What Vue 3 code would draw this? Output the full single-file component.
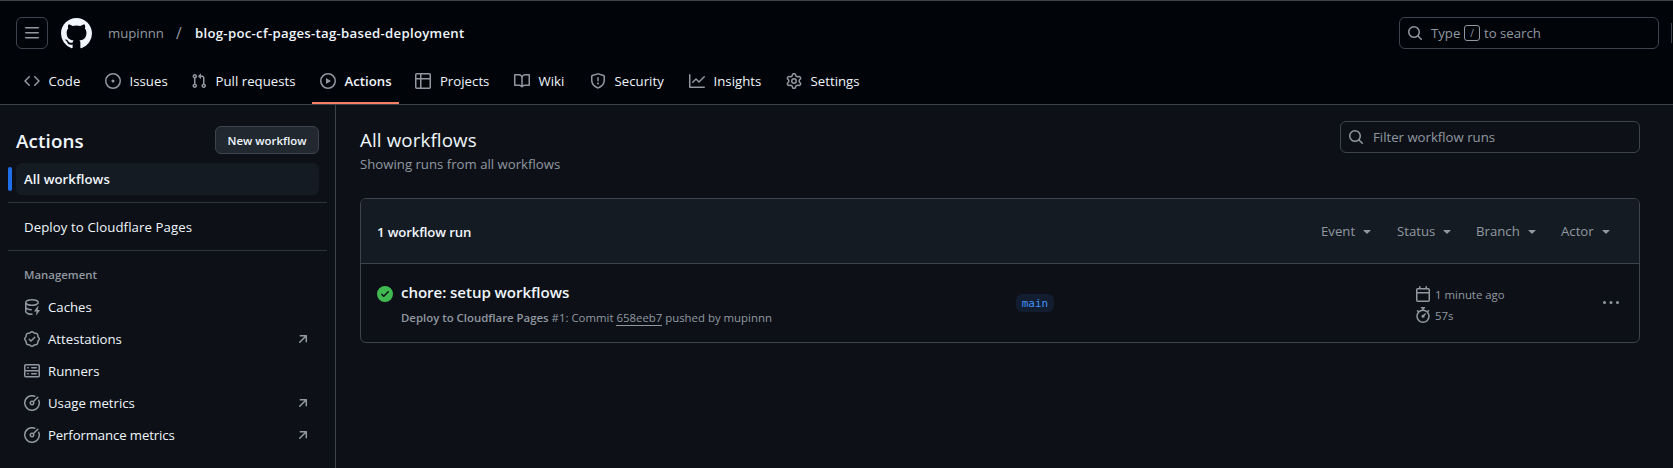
<script setup>
import { h } from 'vue'

const icons = {
  menu: 'M1 2.75A.75.75 0 0 1 1.75 2h12.5a.75.75 0 0 1 0 1.5H1.75A.75.75 0 0 1 1 2.75Zm0 5A.75.75 0 0 1 1.75 7h12.5a.75.75 0 0 1 0 1.5H1.75A.75.75 0 0 1 1 7.75ZM1.75 12h12.5a.75.75 0 0 1 0 1.5H1.75a.75.75 0 0 1 0-1.5Z',
  mark: 'M8 0c4.42 0 8 3.58 8 8a8.013 8.013 0 0 1-5.45 7.59c-.4.08-.55-.17-.55-.38 0-.27.01-1.13.01-2.2 0-.75-.25-1.23-.54-1.48 1.78-.2 3.65-.88 3.65-3.95 0-.88-.31-1.59-.82-2.15.08-.2.36-1.02-.08-2.12 0 0-.67-.22-2.2.82-.64-.18-1.32-.27-2-.27-.68 0-1.36.09-2 .27-1.53-1.03-2.2-.82-2.2-.82-.44 1.1-.16 1.92-.08 2.12-.51.56-.82 1.28-.82 2.15 0 3.06 1.86 3.75 3.64 3.95-.23.2-.44.55-.51 1.07-.46.21-1.61.55-2.33-.66-.15-.24-.6-.83-1.23-.82-.67.01-.27.38.01.53.34.19.73.9.82 1.13.16.45.68 1.31 2.69.94 0 .67.01 1.3.01 1.49 0 .21-.15.45-.55.38A7.995 7.995 0 0 1 0 8c0-4.42 3.58-8 8-8Z',
  code: 'm11.28 3.22 4.25 4.25a.75.75 0 0 1 0 1.06l-4.25 4.25a.749.749 0 0 1-1.275-.326.749.749 0 0 1 .215-.734L13.94 8l-3.72-3.72a.749.749 0 0 1 .326-1.275.749.749 0 0 1 .734.215Zm-6.56 0a.751.751 0 0 1 1.042.018.751.751 0 0 1 .018 1.042L2.06 8l3.72 3.72a.749.749 0 0 1-.326 1.275.749.749 0 0 1-.734-.215L.47 8.53a.75.75 0 0 1 0-1.06Z',
  issue: 'M8 9.5a1.5 1.5 0 1 0 0-3 1.5 1.5 0 0 0 0 3Z M8 0a8 8 0 1 1 0 16A8 8 0 0 1 8 0ZM1.5 8a6.5 6.5 0 1 0 13 0 6.5 6.5 0 0 0-13 0Z',
  pull: 'M1.5 3.25a2.25 2.25 0 1 1 3 2.122v5.256a2.251 2.251 0 1 1-1.5 0V5.372A2.25 2.25 0 0 1 1.5 3.25Zm5.677-.177L9.573.677A.25.25 0 0 1 10 .854V2.5h1A2.5 2.5 0 0 1 13.5 5v5.628a2.251 2.251 0 1 1-1.5 0V5a1 1 0 0 0-1-1h-1v1.646a.25.25 0 0 1-.427.177L7.177 3.427a.25.25 0 0 1 0-.354ZM3.75 2.5a.75.75 0 1 0 0 1.5.75.75 0 0 0 0-1.5Zm0 9.5a.75.75 0 1 0 0 1.5.75.75 0 0 0 0-1.5Zm8.25.75a.75.75 0 1 0 1.5 0 .75.75 0 0 0-1.5 0Z',
  play: 'M8 0a8 8 0 1 1 0 16A8 8 0 0 1 8 0ZM1.5 8a6.5 6.5 0 1 0 13 0 6.5 6.5 0 0 0-13 0Zm4.879-2.773 4.264 2.559a.25.25 0 0 1 0 .428l-4.264 2.559A.25.25 0 0 1 6 10.559V5.442a.25.25 0 0 1 .379-.215Z',
  table: 'M0 1.75C0 .784.784 0 1.75 0h12.5C15.216 0 16 .784 16 1.75v12.5A1.75 1.75 0 0 1 14.25 16H1.75A1.75 1.75 0 0 1 0 14.25ZM6.5 6.5v8h7.75a.25.25 0 0 0 .25-.25V6.5Zm8-1.5V1.75a.25.25 0 0 0-.25-.25H6.5V5Zm-13 1.5v7.75c0 .138.112.25.25.25H5v-8ZM5 5V1.5H1.75a.25.25 0 0 0-.25.25V5Z',
  book: 'M0 1.75A.75.75 0 0 1 .75 1h4.253c1.227 0 2.317.59 3 1.501A3.743 3.743 0 0 1 11.006 1h4.245a.75.75 0 0 1 .75.75v10.5a.75.75 0 0 1-.75.75h-4.507a2.25 2.25 0 0 0-1.591.659l-.622.621a.75.75 0 0 1-1.06 0l-.622-.621A2.25 2.25 0 0 0 5.258 13H.75a.75.75 0 0 1-.75-.75Zm7.251 10.324.004-5.073-.002-2.253A2.25 2.25 0 0 0 5.003 2.5H1.5v9h3.757a3.75 3.75 0 0 1 1.994.574ZM8.755 4.75l-.004 7.322a3.752 3.752 0 0 1 1.992-.572H14.5v-9h-3.495a2.25 2.25 0 0 0-2.25 2.25Z',
  shield: 'M7.467.133a1.748 1.748 0 0 1 1.066 0l5.25 1.68A1.75 1.75 0 0 1 15 3.48V7c0 1.566-.32 3.182-1.303 4.682-.983 1.498-2.585 2.813-5.032 3.855a1.697 1.697 0 0 1-1.33 0c-2.447-1.042-4.049-2.357-5.032-3.855C1.32 10.182 1 8.566 1 7V3.48a1.75 1.75 0 0 1 1.217-1.667Zm.61 1.429a.25.25 0 0 0-.153 0l-5.25 1.68a.25.25 0 0 0-.174.238V7c0 1.358.275 2.666 1.057 3.86.784 1.194 2.121 2.34 4.366 3.297a.196.196 0 0 0 .154 0c2.245-.956 3.582-2.104 4.366-3.298C13.225 9.666 13.5 8.36 13.5 7V3.48a.251.251 0 0 0-.174-.237l-5.25-1.68ZM8.75 4.75v3a.75.75 0 0 1-1.5 0v-3a.75.75 0 0 1 1.5 0ZM9 10.5a1 1 0 1 1-2 0 1 1 0 0 1 2 0Z',
  graph: 'M1.5 1.75V13.5h13.75a.75.75 0 0 1 0 1.5H.75a.75.75 0 0 1-.75-.75V1.75a.75.75 0 0 1 1.5 0Zm14.28 2.53-5.25 5.25a.75.75 0 0 1-1.06 0L7 7.06 4.28 9.78a.751.751 0 0 1-1.042-.018.751.751 0 0 1-.018-1.042l3.25-3.25a.75.75 0 0 1 1.06 0L10 7.94l4.72-4.72a.751.751 0 0 1 1.042.018.751.751 0 0 1 .018 1.042Z',
  gear: 'M8 0a8.2 8.2 0 0 1 .701.031C9.444.095 9.99.645 10.16 1.29l.288 1.107c.018.066.079.158.212.224.231.114.454.243.668.386.123.082.233.09.299.071l1.103-.303c.644-.176 1.392.021 1.82.63.27.385.506.792.704 1.218.315.675.111 1.422-.364 1.891l-.814.806c-.049.048-.098.147-.088.294.016.257.016.515 0 .772-.01.147.038.246.088.294l.814.806c.475.469.679 1.216.364 1.891a7.977 7.977 0 0 1-.704 1.217c-.428.61-1.176.807-1.82.63l-1.102-.302c-.067-.019-.177-.011-.3.071a5.909 5.909 0 0 1-.668.386c-.133.066-.194.158-.211.224l-.29 1.106c-.168.646-.715 1.196-1.458 1.26a8.006 8.006 0 0 1-1.402 0c-.743-.064-1.289-.614-1.458-1.26l-.289-1.106c-.018-.066-.079-.158-.212-.224a5.738 5.738 0 0 1-.668-.386c-.123-.082-.233-.09-.299-.071l-1.103.303c-.644.176-1.392-.021-1.82-.63a8.12 8.12 0 0 1-.704-1.218c-.315-.675-.111-1.422.363-1.891l.815-.806c.05-.048.098-.147.088-.294a6.214 6.214 0 0 1 0-.772c.01-.147-.038-.246-.088-.294l-.815-.806C.635 6.045.431 5.298.746 4.623a7.92 7.92 0 0 1 .704-1.217c.428-.61 1.176-.807 1.82-.63l1.102.302c.067.019.177.011.3-.071.214-.143.437-.272.668-.386.133-.066.194-.158.211-.224l.29-1.106C6.009.645 6.556.095 7.299.03 7.53.01 7.764 0 8 0Zm-.571 1.525c-.036.003-.108.036-.137.146l-.289 1.105c-.147.561-.549.967-.998 1.189-.173.086-.34.183-.5.29-.417.278-.97.423-1.529.27l-1.103-.303c-.109-.03-.175.016-.195.045-.22.312-.412.644-.573.99-.014.031-.021.11.059.19l.815.806c.411.406.562.957.53 1.456a4.709 4.709 0 0 0 0 .582c.032.499-.119 1.05-.53 1.456l-.815.806c-.081.08-.073.159-.059.19.162.346.353.677.573.989.02.03.085.076.195.046l1.102-.303c.56-.153 1.113-.008 1.53.27.161.107.328.204.501.29.447.222.85.629.997 1.189l.289 1.105c.029.109.101.143.137.146a6.6 6.6 0 0 0 1.142 0c.036-.003.108-.036.137-.146l.289-1.105c.147-.561.549-.967.998-1.189.173-.086.34-.183.5-.29.417-.278.97-.423 1.529-.27l1.103.303c.109.029.175-.016.195-.045.22-.313.411-.644.573-.99.014-.031.021-.11-.059-.19l-.815-.806c-.411-.406-.562-.957-.53-1.456a4.709 4.709 0 0 0 0-.582c-.032-.499.119-1.05.53-1.456l.815-.806c.081-.08.073-.159.059-.19a6.464 6.464 0 0 0-.573-.989c-.02-.03-.085-.076-.195-.046l-1.102.303c-.56.153-1.113.008-1.53-.27a4.44 4.44 0 0 0-.501-.29c-.447-.222-.85-.629-.997-1.189l-.289-1.105c-.029-.11-.101-.143-.137-.146a6.6 6.6 0 0 0-1.142 0ZM11 8a3 3 0 1 1-6 0 3 3 0 0 1 6 0ZM9.5 8a1.5 1.5 0 1 0-3.001.001A1.5 1.5 0 0 0 9.5 8Z',
  search: 'M10.68 11.74a6 6 0 0 1-7.922-8.982 6 6 0 0 1 8.982 7.922l3.04 3.04a.749.749 0 0 1-.326 1.275.749.749 0 0 1-.734-.215ZM11.5 7a4.499 4.499 0 1 0-8.997 0A4.499 4.499 0 0 0 11.5 7Z',
  cache: 'M2.5 5.724V8c0 .248.238.7 1.169 1.159.874.43 2.144.745 3.62.822a.75.75 0 1 1-.078 1.498c-1.622-.085-3.102-.432-4.204-.975a5.565 5.565 0 0 1-.507-.28V12.5c0 .133.058.318.282.551.227.237.591.483 1.101.707 1.015.447 2.47.742 4.117.742a.75.75 0 0 1 0 1.5c-1.805 0-3.475-.32-4.721-.869-.623-.274-1.173-.619-1.579-1.041-.408-.425-.7-.964-.7-1.59v-9c0-.626.292-1.165.7-1.591.406-.42.956-.766 1.579-1.04C4.525.32 6.195 0 8 0c1.806 0 3.476.32 4.721.869.623.274 1.173.619 1.579 1.041.408.425.7.964.7 1.59 0 .626-.292 1.165-.7 1.591-.406.42-.956.766-1.578 1.04C11.475 6.68 9.805 7 8 7c-1.805 0-3.475-.32-4.721-.869a6.15 6.15 0 0 1-.779-.407Zm0-2.224c0 .133.058.318.282.551.227.237.591.483 1.101.707C4.898 5.205 6.353 5.5 8 5.5c1.646 0 3.101-.295 4.118-.742.508-.224.873-.471 1.1-.708.224-.232.282-.417.282-.55 0-.133-.058-.318-.282-.551-.227-.237-.591-.483-1.101-.707C11.102 1.795 9.647 1.5 8 1.5c-1.646 0-3.101.295-4.118.742-.508.224-.873.471-1.1.708-.224.232-.282.417-.282.55Z M14.49 7.582a.375.375 0 0 0-.66-.313l-3.625 4.625a.375.375 0 0 0 .295.606h2.127l-.619 2.922a.375.375 0 0 0 .666.304l3.125-4.125A.375.375 0 0 0 15.5 11h-1.778l.769-3.418Z',
  verified: 'm9.585.52.929.68c.153.112.331.186.518.215l1.138.175a2.678 2.678 0 0 1 2.24 2.24l.174 1.139c.029.187.103.365.215.518l.68.928a2.677 2.677 0 0 1 0 3.17l-.68.928a1.174 1.174 0 0 0-.215.518l-.175 1.138a2.678 2.678 0 0 1-2.241 2.241l-1.138.175a1.17 1.17 0 0 0-.518.215l-.928.68a2.677 2.677 0 0 1-3.17 0l-.928-.68a1.174 1.174 0 0 0-.518-.215L3.83 14.41a2.678 2.678 0 0 1-2.24-2.24l-.175-1.138a1.17 1.17 0 0 0-.215-.518l-.68-.928a2.677 2.677 0 0 1 0-3.17l.68-.928c.112-.153.186-.331.215-.518l.175-1.14a2.678 2.678 0 0 1 2.24-2.24l1.139-.175c.187-.029.365-.103.518-.215l.928-.68a2.677 2.677 0 0 1 3.17 0ZM7.303 1.728l-.927.68a2.67 2.67 0 0 1-1.18.489l-1.137.174a1.179 1.179 0 0 0-.987.987l-.174 1.136a2.677 2.677 0 0 1-.489 1.18l-.68.928a1.18 1.18 0 0 0 0 1.394l.68.927c.256.348.424.753.489 1.18l.174 1.137c.078.509.478.909.987.987l1.136.174a2.67 2.67 0 0 1 1.18.489l.928.68c.414.305.979.305 1.394 0l.927-.68a2.67 2.67 0 0 1 1.18-.489l1.137-.174a1.18 1.18 0 0 0 .987-.987l.174-1.136a2.67 2.67 0 0 1 .489-1.18l.68-.928a1.176 1.176 0 0 0 0-1.394l-.68-.927a2.686 2.686 0 0 1-.489-1.18l-.174-1.137a1.179 1.179 0 0 0-.987-.987l-1.136-.174a2.677 2.677 0 0 1-1.18-.489l-.928-.68a1.176 1.176 0 0 0-1.394 0ZM11.28 6.78l-3.75 3.75a.75.75 0 0 1-1.06 0L4.72 8.78a.751.751 0 0 1 .018-1.042.751.751 0 0 1 1.042-.018L7 8.94l3.22-3.22a.751.751 0 0 1 1.042.018.751.751 0 0 1 .018 1.042Z',
  server: 'M1.75 1h12.5c.966 0 1.75.784 1.75 1.75v4c0 .372-.116.717-.314 1 .198.283.314.628.314 1v4a1.75 1.75 0 0 1-1.75 1.75H1.75A1.75 1.75 0 0 1 0 12.75v-4c0-.358.109-.707.314-1a1.739 1.739 0 0 1-.314-1v-4C0 1.784.784 1 1.75 1ZM1.5 2.75v4c0 .138.112.25.25.25h12.5a.25.25 0 0 0 .25-.25v-4a.25.25 0 0 0-.25-.25H1.75a.25.25 0 0 0-.25.25Zm.25 5.75a.25.25 0 0 0-.25.25v4c0 .138.112.25.25.25h12.5a.25.25 0 0 0 .25-.25v-4a.25.25 0 0 0-.25-.25ZM7 4.75A.75.75 0 0 1 7.75 4h4.5a.75.75 0 0 1 0 1.5h-4.5A.75.75 0 0 1 7 4.75ZM7.75 10h4.5a.75.75 0 0 1 0 1.5h-4.5a.75.75 0 0 1 0-1.5ZM3 4.75A.75.75 0 0 1 3.75 4h.5a.75.75 0 0 1 0 1.5h-.5A.75.75 0 0 1 3 4.75ZM3.75 10h.5a.75.75 0 0 1 0 1.5h-.5a.75.75 0 0 1 0-1.5Z',
  meter: 'M8 1.5a6.5 6.5 0 1 0 6.016 4.035.75.75 0 0 1 1.388-.57 8 8 0 1 1-4.37-4.37.75.75 0 0 1-.569 1.389A6.473 6.473 0 0 0 8 1.5Zm6.28.22a.75.75 0 0 1 0 1.06l-4.063 4.064a2.5 2.5 0 1 1-1.06-1.06L13.22 1.72a.75.75 0 0 1 1.06 0ZM7 8a1 1 0 1 0 2 0 1 1 0 0 0-2 0Z',
  arrow: 'M4.53 4.75A.75.75 0 0 1 5.28 4h6.01a.75.75 0 0 1 .75.75v6.01a.75.75 0 0 1-1.5 0v-4.2l-5.26 5.261a.749.749 0 0 1-1.275-.326.749.749 0 0 1 .215-.734L9.48 5.5h-4.2a.75.75 0 0 1-.75-.75Z',
  check: 'M8 16A8 8 0 1 1 8 0a8 8 0 0 1 0 16Zm3.78-9.72a.751.751 0 0 0-.018-1.042.751.751 0 0 0-1.042-.018L6.75 9.19 5.28 7.72a.751.751 0 0 0-1.042.018.751.751 0 0 0-.018 1.042l2 2a.75.75 0 0 0 1.06 0Z',
  calendar: 'M4.75 0a.75.75 0 0 1 .75.75V2h5V.75a.75.75 0 0 1 1.5 0V2h1.25c.966 0 1.75.784 1.75 1.75v10.5A1.75 1.75 0 0 1 13.25 16H2.75A1.75 1.75 0 0 1 1 14.25V3.75C1 2.784 1.784 2 2.75 2H4V.75A.75.75 0 0 1 4.75 0ZM2.5 7.5v6.75c0 .138.112.25.25.25h10.5a.25.25 0 0 0 .25-.25V7.5Zm10.75-4H2.75a.25.25 0 0 0-.25.25V6h11V3.75a.25.25 0 0 0-.25-.25Z',
  stopwatch: 'M5.75.75A.75.75 0 0 1 6.5 0h3a.75.75 0 0 1 0 1.5h-.75v1l-.001.041a6.724 6.724 0 0 1 3.464 1.435l.007-.006.75-.75a.749.749 0 0 1 1.275.326.749.749 0 0 1-.215.734l-.75.75-.006.007a6.75 6.75 0 1 1-10.548 0L2.72 5.03l-.75-.75a.751.751 0 0 1 .018-1.042.751.751 0 0 1 1.042-.018l.75.75.007.006A6.72 6.72 0 0 1 7.25 2.541V1.5H6.5a.75.75 0 0 1-.75-.75ZM8 14.5a5.25 5.25 0 1 0 0-10.5 5.25 5.25 0 0 0 0 10.5Zm.389-6.7 1.33-1.33a.75.75 0 1 1 1.061 1.06L9.45 8.861A1.503 1.503 0 0 1 8 10.75a1.499 1.499 0 1 1 .389-2.95Z',
  kebab: 'M8 9a1.5 1.5 0 1 0 0-3 1.5 1.5 0 0 0 0 3ZM1.5 9a1.5 1.5 0 1 0 0-3 1.5 1.5 0 0 0 0 3Zm13 0a1.5 1.5 0 1 0 0-3 1.5 1.5 0 0 0 0 3Z',
  caret: 'm4.427 7.427 3.396 3.396a.25.25 0 0 0 .354 0l3.396-3.396A.25.25 0 0 0 11.396 7H4.604a.25.25 0 0 0-.177.427Z'
}

const Icon = (props) =>
  h('svg', { viewBox: '0 0 16 16', width: props.size || 16, height: props.size || 16, fill: 'currentColor', 'aria-hidden': true }, [
    h('path', { d: icons[props.name] })
  ])
Icon.props = ['name', 'size']

const tabs = [
  { label: 'Code', icon: 'code', width: 73 },
  { label: 'Issues', icon: 'issue', width: 78 },
  { label: 'Pull requests', icon: 'pull', width: 121 },
  { label: 'Actions', icon: 'play', width: 87.4, active: true },
  { label: 'Projects', icon: 'table', width: 90.6 },
  { label: 'Wiki', icon: 'book', width: 68 },
  { label: 'Security', icon: 'shield', width: 91 },
  { label: 'Insights', icon: 'graph', width: 89 },
  { label: 'Settings', icon: 'gear', width: 91 }
]

const management = [
  { label: 'Caches', icon: 'cache' },
  { label: 'Attestations', icon: 'verified', external: true },
  { label: 'Runners', icon: 'server' },
  { label: 'Usage metrics', icon: 'meter', external: true },
  { label: 'Performance metrics', icon: 'meter', external: true, tight: true }
]

const filters = [
  { label: 'Event', width: 76 },
  { label: 'Status', width: 79 },
  { label: 'Branch', width: 85 },
  { label: 'Actor', width: 54 }
]
</script>

<template>
  <div class="page">
    <header class="header">
      <div class="topbar">
        <button class="menu"><Icon name="menu" /></button>
        <Icon class="logo" name="mark" size="32" />
        <nav class="crumbs">
          <span class="owner">mupinnn</span>
          <span class="slash">/</span>
          <strong class="repo">blog-poc-cf-pages-tag-based-deployment</strong>
        </nav>
        <div class="search">
          <Icon name="search" />
          <span class="hint">Type</span><kbd>/</kbd><span>to search</span>
        </div>
        <i class="separator"></i>
      </div>
      <nav class="tabs">
        <a v-for="tab in tabs" :key="tab.label" class="tab" :class="{ active: tab.active }" :style="{ width: tab.width + 'px' }">
          <Icon :name="tab.icon" /><span>{{ tab.label }}</span>
        </a>
      </nav>
    </header>

    <div class="body">
      <aside class="sidebar">
        <div class="side-head">
          <h2>Actions</h2>
          <button class="new">New workflow</button>
        </div>
        <div class="selected"><i class="marker"></i>All workflows</div>
        <hr />
        <a class="workflow">Deploy to Cloudflare Pages</a>
        <hr />
        <h3>Management</h3>
        <a v-for="item in management" :key="item.label" class="side-item">
          <Icon :name="item.icon" /><span :class="{ tight: item.tight }">{{ item.label }}</span>
          <Icon v-if="item.external" class="external" name="arrow" />
        </a>
      </aside>

      <main class="main">
        <div class="main-head">
          <div>
            <h1>All workflows</h1>
            <p class="subtitle">Showing runs from all workflows</p>
          </div>
          <div class="filter"><Icon name="search" /><span>Filter workflow runs</span></div>
        </div>

        <section class="box">
          <div class="box-head">
            <strong>1 workflow run</strong>
            <div class="filters">
              <a v-for="f in filters" :key="f.label" class="dropdown" :style="{ width: f.width + 'px' }">
                <span>{{ f.label }}</span><Icon name="caret" />
              </a>
            </div>
          </div>
          <div class="run">
            <Icon class="ok" name="check" />
            <div class="run-text">
              <a class="run-title">chore: setup workflows</a>
              <div class="run-meta"><b>Deploy to Cloudflare Pages</b> #1: Commit <u>658eeb7</u> pushed by mupinnn</div>
            </div>
            <div class="branch-cell"><span class="branch">main</span></div>
            <div class="times">
              <div><Icon name="calendar" /><span>1 minute ago</span></div>
              <div><Icon name="stopwatch" /><span>57s</span></div>
            </div>
            <Icon class="kebab" name="kebab" />
          </div>
        </section>
      </main>
    </div>
  </div>
</template>

<style>
body { background: #0d1117; overflow: hidden; }
</style>

<style scoped>
* { box-sizing: border-box; }
svg { display: block; flex: none; }
.page {
  height: 468px;
  display: flex;
  flex-direction: column;
  overflow: hidden;
  background: #0d1117;
  color: #f0f6fc;
  font: 13.2px/20px "Open Sans", "Noto Sans", sans-serif;
  white-space: nowrap;
}
button { font-family: inherit; color: inherit; padding: 0; }
h1, h2, h3, p { margin: 0; }

.header {
  flex: none;
  height: 105px;
  background: #010409;
  border-top: 1px solid #3d4444;
  border-bottom: 1px solid #3d444d;
  display: flex;
  flex-direction: column;
}
.topbar { height: 64px; padding-left: 16px; display: flex; align-items: center; }
.menu {
  width: 32px;
  height: 32px;
  display: grid;
  place-items: center;
  background: none;
  border: 1px solid #3d444d;
  border-radius: 6px;
  color: #9198a1;
}
.logo { margin-left: 13px; width: 31px; height: 31px; }
.crumbs { display: flex; margin-left: 16px; }
.owner { width: 68px; color: #9198a1; }
.slash { width: 19px; color: #9198a1; font-size: 15.5px; }
.repo { font-weight: 600; letter-spacing: 0.28px; }
.search {
  margin-left: auto;
  width: 260px;
  height: 32px;
  padding-left: 7px;
  display: flex;
  align-items: center;
  border: 1px solid #3d444d;
  border-radius: 6px;
  color: #9198a1;
}
.hint { width: 33px; margin-left: 8px; }
.search kbd {
  width: 16px;
  height: 16px;
  margin-right: 4px;
  border: 1px solid #9198a1;
  border-radius: 3px;
  font: 10px/14px "Open Sans", sans-serif;
  text-align: center;
}
.separator { width: 1px; height: 20px; margin: 0 1px 0 12px; background: #3d444d; }

.tabs { flex: 1; display: flex; gap: 8px; padding-left: 16px; }
.tab { position: relative; height: 32px; display: flex; align-items: center; gap: 8.5px; padding-left: 8px; letter-spacing: 0.03px; }
.tab svg { color: #9198a1; }
.active { font-weight: 600; }
.active::after { content: ''; position: absolute; left: 0; right: 0; bottom: -7px; height: 2px; background: #f78166; }

.body { flex: 1; display: flex; }
.sidebar { width: 336px; border-right: 1px solid #3d444d; padding: 0 8px; }
.side-head { height: 58px; padding: 14px 8px 0; display: flex; align-items: center; justify-content: space-between; }
h2 { font-size: 18.8px; font-weight: 600; letter-spacing: 0.12px; }
.new {
  width: 104px;
  height: 28px;
  margin-top: -3px;
  padding-top: 1px;
  background: #212830;
  border: 1px solid #3d444d;
  border-radius: 6px;
  font-size: 11.4px;
  font-weight: 600;
}
.selected {
  position: relative;
  height: 32px;
  margin: 0 8px;
  padding-left: 8px;
  border-radius: 6px;
  background: #151b23;
  font-weight: 600;
  line-height: 32px;
  letter-spacing: 0.05px;
}
.marker { position: absolute; left: -8px; top: 4px; width: 4px; height: 24px; border-radius: 4px; background: #1f6feb; }
hr { height: 1px; margin: 7px 0 8px; border: 0; background: #2f353d; }
.workflow { display: block; height: 32px; padding-left: 16px; line-height: 32px; letter-spacing: 0.1px; }
h3 { height: 32px; padding-left: 16px; font-size: 11.4px; line-height: 32px; font-weight: 600; color: #9198a1; }
.side-item { height: 32px; display: flex; align-items: center; gap: 8px; padding: 0 16px; }
.side-item svg { color: #9198a1; }
.side-item .external { margin-left: auto; }
.tight { letter-spacing: -0.12px; }

.main { flex: 1; padding: 16px 33px 0 24px; }
.main-head { display: flex; justify-content: space-between; height: 77px; }
h1 { font-size: 18.8px; line-height: 28px; font-weight: 400; padding-top: 5px; letter-spacing: 0.1px; }
.subtitle { color: #9198a1; line-height: 20px; }
.filter {
  width: 300px;
  height: 32px;
  padding-left: 7px;
  display: flex;
  align-items: center;
  gap: 9px;
  border: 1px solid #3d444d;
  border-radius: 6px;
  color: #9198a1;
}
.box { height: 145px; border: 1px solid #3d444d; border-radius: 6px; overflow: hidden; }
.box-head {
  height: 65px;
  padding: 2px 16px 0;
  display: flex;
  align-items: center;
  justify-content: space-between;
  background: #151b23;
  border-bottom: 1px solid #3d444d;
}
.box-head strong { font-weight: 600; letter-spacing: -0.14px; }
.filters { display: flex; color: #9198a1; margin: -2px 8px 0 0; }
.dropdown { display: flex; align-items: center; }
.dropdown svg { margin-left: 4px; }
.run { display: flex; padding: 16px; }
.ok { color: #3fb950; margin-top: 6px; }
.run-text { width: 615px; padding-left: 8px; }
.run-title { display: block; font-size: 15.1px; font-weight: 600; line-height: 24px; letter-spacing: -0.07px; }
.run-meta { margin-top: 4px; font-size: 11.4px; color: #9198a1; }
.run-meta b { font-weight: 600; }
.run-meta u { text-decoration: none; border-bottom: 1px solid #9198a1; }
.branch-cell { width: 407px; padding: 14px 0 0 8px; }
.branch {
  display: block;
  width: 38px;
  height: 18px;
  border-radius: 6px;
  background: #121d2f;
  color: #4493f8;
  font: 11px/20px "DejaVu Sans Mono", monospace;
  text-align: center;
}
.times { width: 188px; padding-top: 6px; color: #9198a1; font-size: 11.4px; }
.times div { display: flex; align-items: center; gap: 4px; height: 16px; margin-bottom: 5px; }
.times span { padding-top: 2px; }
.kebab { margin-top: 15px; color: #9198a1; }
</style>
